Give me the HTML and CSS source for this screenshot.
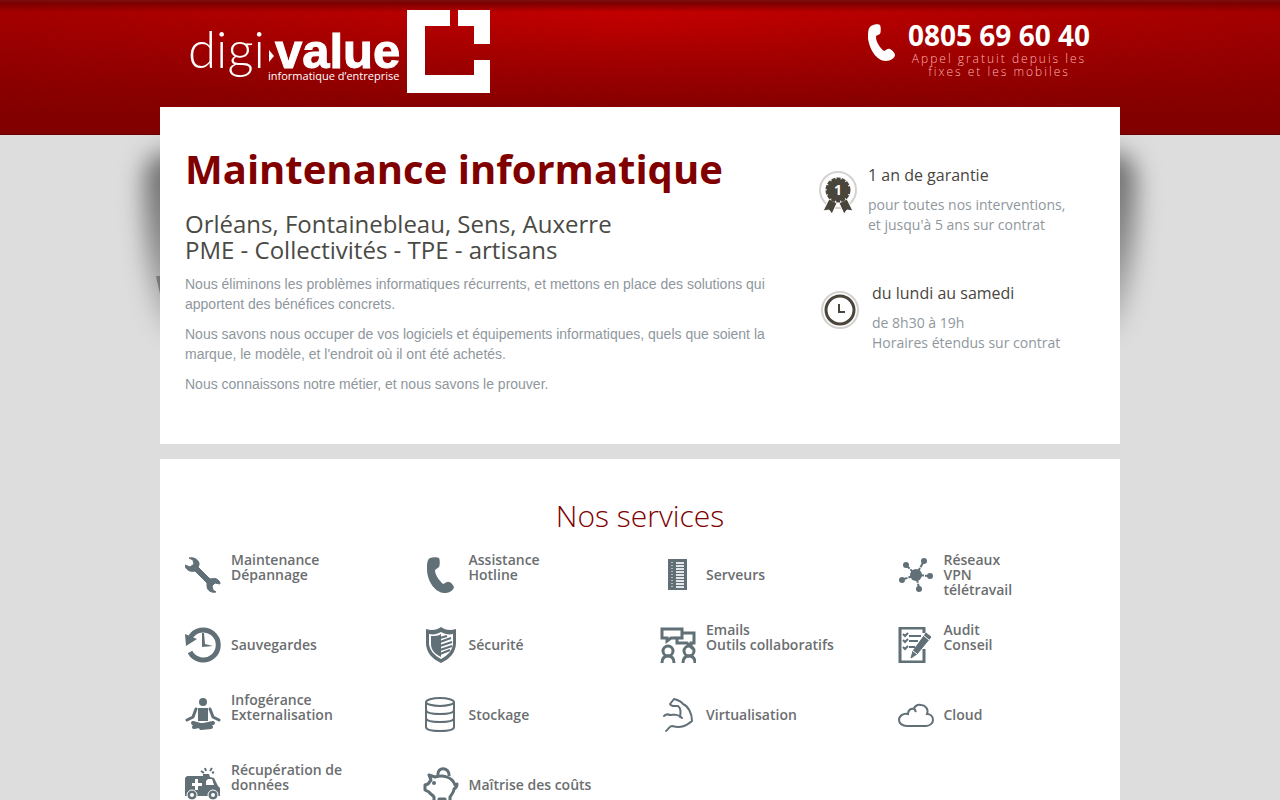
FILE: index.html
```html
<!DOCTYPE html>
<html lang="fr">
<head>
    <meta charset="UTF-8">
    <meta name="viewport" content="width=device-width, initial-scale=1">
    <title>Digi-Value - Maintenance informatique</title>
    <link rel="stylesheet" href="styles.css">
</head>
<body>
    <header class="header">
        <div class="container header-inner">
            <a href="/" class="logo" aria-label="digi-value">
                <svg width="300" height="84" viewBox="0 0 300 84">
                    <g fill="#fff">
                        <text class="logo-thin" x="-2" y="58">digi</text>
                        <path d="M79 40l5 6-5 6z"/>
                        <text class="logo-bold" x="85" y="58">value</text>
                        <text class="logo-small" x="78" y="70">informatique d’entreprise</text>
                        <path d="M217 0h43v16h-25v49h49V50h16v33h-83zM268 0h32v34h-16V16h-16z"/>
                    </g>
                </svg>
            </a>
            <div class="phone">
                <svg width="28" height="38" viewBox="0 0 28 38"><path fill="#fff" d="M3 2C6 0 11 0 12 1c1 2 1 7 0 9-1 1-4 1-4 3 0 5 4 11 8 14 2 0 3-3 6-2 2 1 5 4 5 6 0 3-5 6-9 6C8 37 1 24 0 14 0 9 0 4 3 2z"/></svg>
                <div class="phone-text">
                    <strong>0805 69 60 40</strong>
                    <span>Appel gratuit depuis les fixes et les mobiles</span>
                </div>
            </div>
        </div>
    </header>

    <main class="container main">
        <section class="box hero">
            <div class="hero-text">
                <h1>Maintenance informatique</h1>
                <h2>Orléans, Fontainebleau, Sens, Auxerre<br>PME - Collectivités - TPE - artisans</h2>
                <p>Nous éliminons les problèmes informatiques récurrents, et mettons en place des solutions qui apportent des bénéfices concrets.</p>
                <p>Nous savons nous occuper de vos logiciels et équipements informatiques, quels que soient la marque, le modèle, et l'endroit où il ont été achetés.</p>
                <p>Nous connaissons notre métier, et nous savons le prouver.</p>
            </div>
            <div class="features">
                <div class="feature">
                    <svg width="40" height="46" viewBox="0 0 40 46">
                        <circle cx="20" cy="20" r="18" fill="none" stroke="#d3d2d1" stroke-width="2"/>
                        <path d="M11 29l8 4-5 11-3-4-6 1zM29 29l-8 4 5 11 3-4 6 1z" fill="#4a453b" stroke="#fff"/>
                        <circle cx="20" cy="20" r="11" fill="#4a453b"/>
                        <circle cx="20" cy="20" r="11" fill="none" stroke="#4a453b" stroke-width="3" stroke-dasharray="4 1"/>
                        <text class="medal" x="20" y="25">1</text>
                    </svg>
                    <div>
                        <h3>1 an de garantie</h3>
                        <p>pour toutes nos interventions,<br>et jusqu'à 5 ans sur contrat</p>
                    </div>
                </div>
                <div class="feature">
                    <svg width="44" height="46" viewBox="0 0 44 46">
                        <circle cx="22" cy="22" r="18" fill="none" stroke="#d3d2d1" stroke-width="2"/>
                        <circle cx="22" cy="22" r="14" fill="none" stroke="#4a453b" stroke-width="3"/>
                        <path d="M21 16v8h6" fill="none" stroke="#4a453b" stroke-width="2"/>
                    </svg>
                    <div>
                        <h3>du lundi au samedi</h3>
                        <p>de 8h30 à 19h<br>Horaires étendus sur contrat</p>
                    </div>
                </div>
            </div>
        </section>

        <section class="box services">
            <h2>Nos services</h2>
            <ul class="services-list">
                <li>
                    <svg class="icon" viewBox="0 0 36 36"><path fill="#616f77" stroke="#616f77" d="M4 1c4-1 9 1 10 5 0 2 0 3-1 4l12 12c3-1 7-1 9 2 1 1 1 2 1 3l-5-1-3 3 1 4 3 2c-4 1-9-1-9-6v-3L10 14c-3 1-7 0-9-3L0 8l5 2 4-3-1-4z"/></svg>
                    <span>Maintenance<br>Dépannage</span>
                </li>
                <li>
                    <svg class="icon" viewBox="0 0 36 36"><path fill="#616f77" d="M7 1c3-1 7-1 9 0 1 2 1 7 0 9l-4 3c0 5 4 10 8 14 2 0 4-3 6-2 2 0 4 3 5 5-1 4-5 6-10 6C11 35 4 23 4 12 4 7 4 3 7 1z"/></svg>
                    <span>Assistance<br>Hotline</span>
                </li>
                <li>
                    <svg class="icon" viewBox="0 0 36 36"><path fill="#616f77" d="M8 2h19v31H8z"/><path stroke="#e3e7e9" stroke-width="2" d="M16 6h8M16 9h8M16 12h8M16 15h8M16 18h8M16 21h8M16 24h8M16 27h8M16 30h8"/><path stroke="#aeb8bd" stroke-width="2" stroke-dasharray="1 2" d="M12 5v26"/></svg>
                    <span>Serveurs</span>
                </li>
                <li>
                    <svg class="icon" viewBox="0 0 36 36"><path stroke="#616f77" stroke-width="2" stroke-dasharray="8 1" d="M18 18L8 8M18 18l8-14M18 18l14 1M18 18L3 23M18 18l3 13"/><g fill="#616f77"><circle cx="18" cy="18" r="6"/><circle cx="8" cy="8" r="3"/><circle cx="26" cy="4" r="3"/><circle cx="32" cy="19" r="3"/><circle cx="4" cy="23" r="3"/><circle cx="21" cy="32" r="3"/></g></svg>
                    <span>Réseaux<br>VPN<br>télétravail</span>
                </li>
                <li>
                    <svg class="icon" viewBox="0 0 36 36"><path fill="none" stroke="#616f77" stroke-width="5" d="M5 11A15 15 0 1 1 5 25"/><path fill="#616f77" d="M0 7l12 5-11 7zM17 6h2l1 11 8 2-11 1z"/></svg>
                    <span>Sauvegardes</span>
                </li>
                <li>
                    <svg class="icon" viewBox="0 0 36 36"><path fill="#616f77" d="M18 0c4 3 9 4 15 2v14c0 9-6 16-15 20C9 32 3 25 3 16V2c6 2 11 1 15-2z"/><path fill="#fff" d="M18 5c4 2 7 3 12 2v10c-1 7-5 11-12 15C11 28 7 24 6 17V7c5 1 8 0 12-2z"/><path fill="#616f77" d="M18 7v23C12 27 8 23 8 17V9c4 0 7 0 10-2z"/><path stroke="#616f77" stroke-width="2" d="M17 11l7-2M17 15l11-4M17 19l12-4M17 23l12-4M17 27l10-4"/></svg>
                    <span>Sécurité</span>
                </li>
                <li>
                    <svg class="icon" viewBox="0 0 36 36"><g fill="none" stroke="#616f77" stroke-width="3"><path d="M16 11h-5l-4 3v-3H2V2h20v4"/><path d="M22 6h12v10h-3v4l-4-4H17v-5h5V6"/><circle cx="8" cy="24" r="5"/><path d="M2 36c0-5 2-7 6-7s6 2 6 7M23 36c0-5 2-7 6-7s6 2 6 7"/><circle cx="29" cy="24" r="5"/></g></svg>
                    <span>Emails<br>Outils collaboratifs</span>
                </li>
                <li>
                    <svg class="icon" viewBox="0 0 36 36"><path fill="none" stroke="#616f77" stroke-width="3" d="M26 6V1H2v34h24V22"/><path fill="none" stroke="#616f77" stroke-width="2" d="M5 7l2 2 3-3M5 13l2 2 3-3M5 20l2 2 3-3M11 9h12M11 14h9M11 20h6"/><path fill="#616f77" stroke="#616f77" d="M28 6l5 4-14 17-6 4 2-7z"/><path stroke="#fff" d="M25 8l6 5M15 24l4 3"/></svg>
                    <span>Audit<br>Conseil</span>
                </li>
                <li>
                    <svg class="icon" viewBox="0 0 36 36"><g fill="#616f77"><circle cx="18" cy="5" r="4"/><path d="M13 11h10v13H13z"/></g><path fill="none" stroke="#616f77" stroke-width="3" stroke-linecap="round" d="M11 12L8 20l-6 3M25 12l3 8 6 3"/><path fill="none" stroke="#616f77" stroke-width="4" stroke-linecap="round" d="M8 26l14 4M28 26l-14 3-5 1M16 31l10-1"/></svg>
                    <span>Infogérance<br>Externalisation</span>
                </li>
                <li>
                    <svg class="icon" viewBox="0 0 36 36"><g fill="none" stroke="#616f77" stroke-width="2"><ellipse cx="17" cy="5" rx="14" ry="4"/><path d="M3 5v25c0 3 6 4 14 4s14-1 14-4V5M3 13c0 3 6 4 14 4s14-1 14-4M3 21c0 3 6 4 14 4s14-1 14-4"/></g></svg>
                    <span>Stockage</span>
                </li>
                <li>
                    <svg class="icon" viewBox="0 0 36 36"><path fill="none" stroke="#616f77" stroke-width="2" stroke-linecap="round" stroke-linejoin="round" d="M6 34c3-2 3-5 6-5 8 2 13 1 20-5 0-8-4-15-9-17-2-3-5-4-9-5l-4 5c1 3 4 2 8 2 3 2 3 6 2 11M4 19c2-2 4-2 6-1 4 0 7-2 12 3"/></svg>
                    <span>Virtualisation</span>
                </li>
                <li>
                    <svg class="icon" viewBox="0 0 36 36"><path fill="none" stroke="#616f77" stroke-width="2" d="M9 29h19c4 0 7-3 7-6 0-4-3-6-6-6 2-5-2-9-6-9-4-1-7 2-7 4-3-1-6 1-6 5-5-1-9 2-9 6 0 3 3 6 8 6zM16 11l2 4"/></svg>
                    <span>Cloud</span>
                </li>
                <li>
                    <svg class="icon" viewBox="0 0 36 36"><path fill="#616f77" d="M2 9h16v-2h6l1 3 4 1 4 8 2 2v8H0V11z"/><path fill="#fff" d="M23 12h4l2 6h-8v-4zM10 12h3v4h4v3h-4v4h-3v-4H7v-3h3z"/><g fill="#616f77" stroke="#fff"><circle cx="7" cy="28" r="5"/><circle cx="28" cy="28" r="5"/></g><g fill="#fff"><circle cx="7" cy="28" r="2"/><circle cx="28" cy="28" r="2"/></g><path stroke="#616f77" stroke-width="2" d="M16 4l3 2M20 1l1 3M27 1l-2 3M29 5l-2 1"/></svg>
                    <span>Récupération de<br>données</span>
                </li>
                <li>
                    <svg class="icon" viewBox="0 0 36 36"><g fill="none" stroke="#616f77" stroke-width="3" stroke-linejoin="round"><path d="M8 13L6 8l6 2c7-2 17-1 20 8l2-1c0 4-2 4-3 5 0 4-3 6-4 8v5h-5v-3h-6v3h-5v-5c-1-2-4-3-5-5l-4-2v-5l3-1z"/><path d="M15 8c-1-9 12-8 11 1"/></g><circle cx="11" cy="16" r="2" fill="#616f77"/></svg>
                    <span>Maîtrise des coûts</span>
                </li>
            </ul>
        </section>
    </main>
</body>
</html>
```
FILE: styles.css
```css
* {
    margin: 0;
    padding: 0;
    box-sizing: border-box;
}

body {
    background-color: #ddd;
    font-family: "Open Sans", "Liberation Sans", sans-serif;
    font-size: 14px;
    line-height: 20px;
    color: #8f979d;
}

.container {
    max-width: 960px;
    margin: 0 auto;
}

/* Header */
.header {
    height: 135px;
    border-bottom: 1px solid #6a0000;
    background:
        linear-gradient(#7d1010 0, #7a0000 3px, transparent 12px),
        repeating-linear-gradient(45deg, rgba(0, 0, 0, 0.04) 0, rgba(0, 0, 0, 0.04) 1px, transparent 1px, transparent 3px),
        linear-gradient(transparent 15px, rgba(128, 0, 0, 0.9) 115px),
        radial-gradient(ellipse 800px 240px at center 20px, #c40000, #9c0000);
}

.header-inner {
    display: flex;
    justify-content: space-between;
    align-items: flex-start;
    padding: 10px 30px;
}

.logo svg {
    display: block;
    overflow: visible;
}

.logo-thin {
    font-family: Lato, sans-serif;
    font-size: 51px;
    font-weight: 300;
}

.logo-bold {
    font-family: "Liberation Sans", Arial, sans-serif;
    font-size: 49px;
    font-weight: bold;
    stroke: #fff;
}

.logo-small {
    font-size: 11px;
}

.phone {
    display: flex;
    gap: 12px;
    padding-top: 14px;
}

.phone-text {
    width: 182px;
    text-align: center;
    color: #fff;
}

.phone-text strong {
    display: block;
    font-size: 28px;
    line-height: 22px;
    margin-bottom: 6px;
    white-space: nowrap;
}

.phone-text span {
    display: block;
    font-size: 12px;
    font-weight: 300;
    line-height: 13px;
    letter-spacing: 2px;
    color: #ffb3b3;
}

/* Content boxes */
.main {
    position: relative;
    margin-top: -28px;
}

/* soft shadow on both sides of the first box */
.main::before {
    content: "";
    position: absolute;
    z-index: -1;
    top: 46px;
    left: -16px;
    right: -16px;
    height: 180px;
    border-radius: 20px 20px 30px 30px / 30px 30px 150px 150px;
    background: linear-gradient(#666, #888 50%, #bbb);
    filter: blur(12px);
}

.main::after {
    content: "";
    position: absolute;
    top: 169px;
    left: -4px;
    border-top: 18px solid #777;
    border-left: 4px solid transparent;
}

.box {
    background-color: #fff;
    padding: 36px 25px;
    margin-bottom: 15px;
}

.hero {
    display: grid;
    grid-template-columns: 1fr 277px;
    column-gap: 40px;
    min-height: 337px;
}

.hero h1 {
    font-size: 40px;
    line-height: 52px;
    color: #800000;
    white-space: nowrap;
}

.hero h2 {
    font-size: 24px;
    font-weight: 400;
    line-height: 26px;
    color: #4a4a45;
    margin: 16px 0 11px;
}

.hero-text p {
    font-family: "Liberation Sans", Arial, sans-serif;
    margin-bottom: 10px;
}

.features {
    display: flex;
    flex-direction: column;
    gap: 48px;
    padding-top: 22px;
}

.feature {
    display: flex;
    gap: 10px;
}

.feature h3 {
    font-size: 16px;
    font-weight: 400;
    line-height: 20px;
    color: #4a4540;
    margin-bottom: 10px;
}

.feature svg {
    flex: none;
    margin-top: 5px;
}

.medal {
    fill: #fff;
    font-size: 14px;
    font-weight: bold;
    text-anchor: middle;
}

/* Services */
.services h2 {
    font-size: 30px;
    font-weight: 300;
    line-height: 42px;
    text-align: center;
    color: #800000;
    margin-bottom: 15px;
}

.services-list {
    display: grid;
    grid-template-columns: repeat(4, 1fr);
    grid-auto-rows: 50px;
    gap: 20px 40px;
    list-style: none;
}

.services-list li {
    display: flex;
    align-items: flex-start;
    gap: 10px;
    color: #6b6e70;
    font-weight: 600;
    line-height: 15px;
    white-space: nowrap;
}

.services-list span {
    display: flow-root;
    align-content: end;
    min-height: 30px;
}

.icon {
    flex: none;
    width: 36px;
    height: 36px;
    margin-top: 5px;
}

@media (max-width: 900px) {
    .hero {
        grid-template-columns: 1fr;
    }

    .hero h1 {
        white-space: normal;
    }

    .services-list {
        grid-template-columns: repeat(2, 1fr);
    }
}
```
